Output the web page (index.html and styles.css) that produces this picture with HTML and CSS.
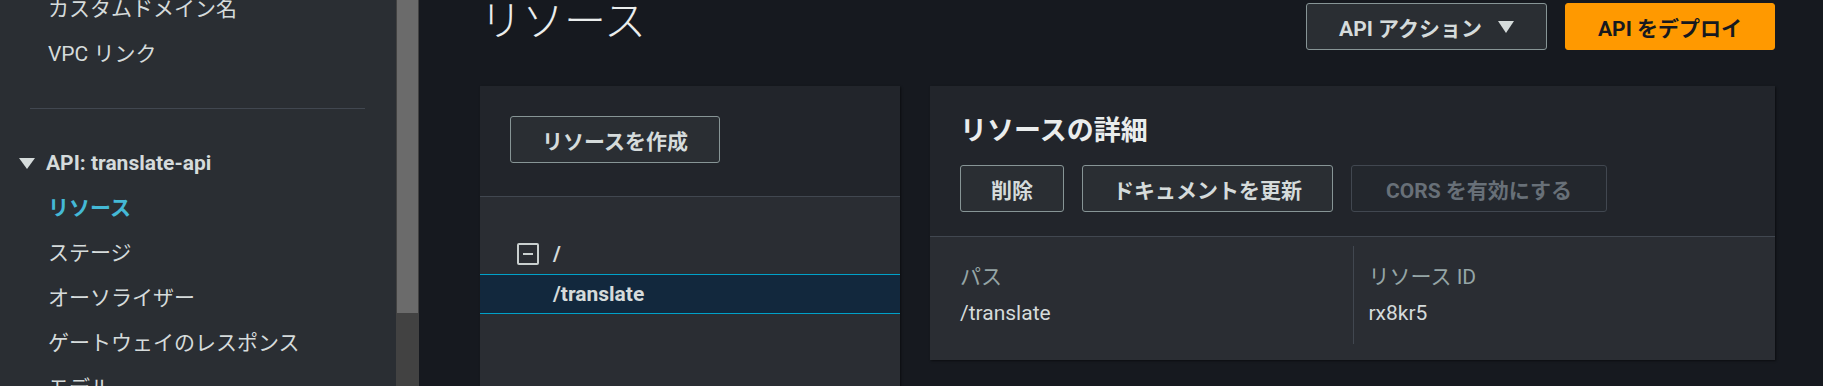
FILE: index.html
```html
<!DOCTYPE html>
<html lang="ja">
<head>
    <meta charset="UTF-8">
    <meta name="viewport" content="width=device-width, initial-scale=1.0">
    <title>リソース - API Gateway</title>
    <link rel="stylesheet" href="styles.css">
</head>
<body>

    <div class="layout">
        <nav class="sidebar">
            <div class="nav-scroll">
                <ul class="nav-list">
                    <li class="nav-item">カスタムドメイン名</li>
                    <li class="nav-item">VPC リンク</li>
                </ul>
                <div class="nav-divider"></div>
                <div class="nav-group-title"><span class="caret"></span>API: translate-api</div>
                <ul class="nav-list">
                    <li class="nav-item active">リソース</li>
                    <li class="nav-item">ステージ</li>
                    <li class="nav-item">オーソライザー</li>
                    <li class="nav-item">ゲートウェイのレスポンス</li>
                    <li class="nav-item">モデル</li>
                </ul>
            </div>
            <div class="scrollbar"><div class="scroll-thumb"></div></div>
        </nav>

        <main class="content">
            <header class="page-header">
                <h1 class="page-title">リソース</h1>
                <div class="header-actions">
                    <button class="btn">API アクション <span class="btn-caret"></span></button>
                    <button class="btn btn-primary">API をデプロイ</button>
                </div>
            </header>

            <div class="panels">
                <section class="tree-panel">
                    <div class="tree-toolbar">
                        <button class="btn">リソースを作成</button>
                    </div>
                    <div class="tree">
                        <div class="tree-row">
                            <span class="tree-toggle"></span>
                            <span class="tree-label">/</span>
                        </div>
                        <div class="tree-row selected">
                            <span class="tree-label">/translate</span>
                        </div>
                    </div>
                </section>

                <section class="detail-panel">
                    <div class="detail-header">
                        <h2 class="detail-title">リソースの詳細</h2>
                        <div class="detail-actions">
                            <button class="btn">削除</button>
                            <button class="btn">ドキュメントを更新</button>
                            <button class="btn" disabled>CORS を有効にする</button>
                        </div>
                    </div>
                    <div class="detail-body">
                        <div class="detail-col">
                            <div class="detail-label">パス</div>
                            <div class="detail-value">/translate</div>
                        </div>
                        <div class="detail-col">
                            <div class="detail-label">リソース ID</div>
                            <div class="detail-value">rx8kr5</div>
                        </div>
                    </div>
                </section>
            </div>
        </main>
    </div>

</body>
</html>
```

FILE: styles.css
```css
body {
    font-family: 'Roboto', 'Noto Sans CJK JP', sans-serif;
    margin: 0;
    padding: 0;
    background-color: #16191F;
    color: #D5DBDB;
    overflow: hidden;
    height: 386px;
}

.layout {
    display: flex;
    height: 386px;
}

/* barra lateral */
.sidebar {
    display: flex;
    width: 419px;
    flex-shrink: 0;
    background-color: #2A2E33;
}

.nav-scroll {
    width: 396px;
    margin-top: -13px;
}

.nav-list {
    list-style: none;
    margin: 0;
    padding: 0;
}

.nav-item {
    font-size: 21px;
    line-height: 45px;
    height: 45px;
    padding-left: 48px;
    white-space: nowrap;
}

.nav-item.active {
    color: #44B9D6;
    font-weight: bold;
}

.nav-divider {
    height: 1px;
    margin: 31px 31px 32px 30px;
    background-color: #414750;
}

.nav-group-title {
    display: flex;
    align-items: center;
    font-size: 21px;
    font-weight: bold;
    line-height: 45px;
    height: 45px;
    padding-left: 19px;
}

.caret {
    width: 0;
    height: 0;
    border-left: 8px solid transparent;
    border-right: 8px solid transparent;
    border-top: 11px solid #D5DBDB;
    margin-right: 11px;
}

.scrollbar {
    width: 23px;
    background-color: #424242;
}

.scroll-thumb {
    height: 313px;
    margin: 0 1px;
    background-color: #6B6B6B;
}

/* conteudo principal */
.content {
    flex: 1;
    padding: 3px 48px 0 61px;
}

.page-header {
    display: flex;
    justify-content: space-between;
    align-items: flex-start;
}

.page-title {
    margin: -4px 0 0 0;
    font-size: 42px;
    font-weight: 300;
    line-height: 46px;
    color: #EAEDED;
}

.header-actions {
    display: flex;
    gap: 18px;
}

.btn {
    display: inline-flex;
    align-items: center;
    justify-content: center;
    box-sizing: border-box;
    height: 47px;
    padding: 0 31px;
    font-family: inherit;
    font-size: 21px;
    font-weight: bold;
    color: #D5DBDB;
    background-color: #2A2E33;
    border: 1px solid #879596;
    border-radius: 3px;
    white-space: nowrap;
    cursor: pointer;
}

.header-actions .btn {
    padding: 0 32px;
}

.btn:disabled {
    color: #687078;
    border-color: #414750;
    background-color: #23272D;
}

.btn-primary {
    background-color: #FF9900;
    border-color: #FF9900;
    color: #16191F;
}

.btn-caret {
    width: 0;
    height: 0;
    margin-left: 16px;
    border-left: 8px solid transparent;
    border-right: 8px solid transparent;
    border-top: 12px solid #D5DBDB;
}

.panels {
    display: flex;
    align-items: flex-start;
    gap: 30px;
    margin-top: 36px;
}

/* arvore de recursos */
.tree-panel {
    width: 420px;
    height: 330px;
    flex-shrink: 0;
    background-color: #2A2D33;
    box-shadow: 1px 1px 2px rgba(0, 0, 0, 0.5);
}

.tree-toolbar {
    height: 111px;
    box-sizing: border-box;
    padding: 30px;
    background-color: #22252B;
    border-bottom: 1px solid #414750;
}

.tree {
    padding-top: 37px;
}

.tree-row {
    display: flex;
    align-items: center;
    height: 40px;
    box-sizing: border-box;
    padding-left: 73px;
    font-size: 21px;
    font-weight: bold;
}

.tree-row:first-child {
    padding-left: 37px;
}

.tree-row.selected {
    background-color: #12283D;
    border-top: 1px solid #00A1C9;
    border-bottom: 1px solid #00A1C9;
}

.tree-toggle {
    position: relative;
    width: 22px;
    height: 22px;
    box-sizing: border-box;
    margin-right: 14px;
    border: 2px solid #C9CFCF;
    border-radius: 2px;
}

.tree-toggle::after {
    content: '';
    position: absolute;
    left: 4px;
    top: 8px;
    width: 10px;
    height: 2px;
    background-color: #C9CFCF;
}

/* detalhes */
.detail-panel {
    flex: 1;
    background-color: #2A2D33;
    box-shadow: 1px 1px 2px rgba(0, 0, 0, 0.5);
}

.detail-header {
    padding: 27px 30px 24px;
    background-color: #22252B;
    border-bottom: 1px solid #414750;
}

.detail-title {
    margin: 0 0 16px 0;
    font-size: 27px;
    font-weight: bold;
    line-height: 36px;
    color: #EAEDED;
}

.detail-actions {
    display: flex;
    gap: 18px;
}

.detail-actions .btn {
    padding: 0 30px;
}

.detail-actions .btn:disabled {
    padding: 0 34px;
}

.detail-body {
    display: grid;
    grid-template-columns: 1fr 1fr;
    padding: 9px 30px 16px;
}

.detail-col {
    padding: 13px 0;
}

.detail-col + .detail-col {
    border-left: 1px solid #414750;
    padding-left: 15px;
}

.detail-label {
    font-size: 21px;
    line-height: 36px;
    color: #95A5A6;
}

.detail-value {
    font-size: 21px;
    line-height: 36px;
    color: #D5DBDB;
}
```
